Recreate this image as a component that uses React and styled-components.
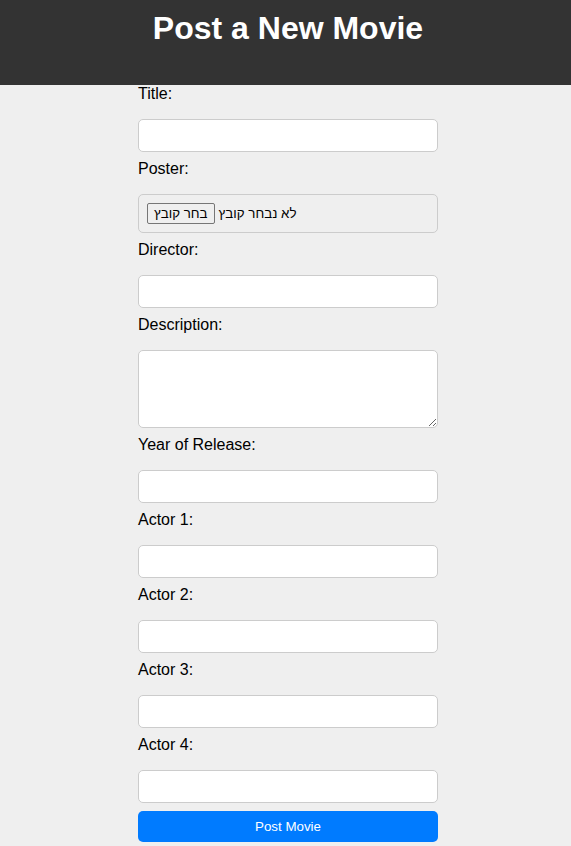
import React from "react";
import styled, { createGlobalStyle } from "styled-components";

const GlobalStyle = createGlobalStyle`
  html, body {
    margin: 0;
    padding: 0;
    background: #efefef;
    overflow: hidden;
  }
  body {
    font-family: "Liberation Sans", Arial, sans-serif;
  }
  #root {
    width: 576px;
  }
`;

const Header = styled.header`
  background: #333333;
  color: #fff;
  text-align: center;
  padding: 10px 0 38px;
`;

const Title = styled.h1`
  margin: 0;
  font-size: 32px;
  font-weight: 700;
  line-height: 37px;
`;

const Form = styled.form`
  width: 300px;
  margin: 0 auto;
  display: flex;
  flex-direction: column;
`;

const Label = styled.label`
  display: block;
  font-size: 16px;
  line-height: 18px;
  color: #000;
  margin-bottom: 16px;
`;

const Input = styled.input`
  box-sizing: border-box;
  width: 100%;
  height: 33px;
  padding: 8px;
  margin: 0 0 8px;
  border: 1px solid #ccc;
  border-radius: 5px;
  background: #fff;
  font-family: "Liberation Sans", Arial, sans-serif;
  font-size: 13.33px;
`;

const TextArea = styled.textarea`
  box-sizing: border-box;
  width: 100%;
  height: 78px;
  padding: 8px;
  margin: 0 0 8px;
  border: 1px solid #ccc;
  border-radius: 5px;
  background: #fff;
  font-family: "Liberation Sans", Arial, sans-serif;
  font-size: 13.33px;
  display: block;
`;

const FileBox = styled.div`
  box-sizing: border-box;
  width: 100%;
  height: 39px;
  padding: 8px;
  margin: 0 0 8px;
  border: 1px solid #ccc;
  border-radius: 5px;
  display: flex;
  align-items: center;
  gap: 4px;
  font-family: "Liberation Sans", "DejaVu Sans", Arial, sans-serif;
  font-size: 13.33px;
  color: #000;
`;

const FileButton = styled.span`
  box-sizing: border-box;
  height: 21px;
  padding: 0 6px;
  display: inline-flex;
  align-items: center;
  border: 1px solid #767676;
  border-radius: 2px;
  background: #efefef;
  direction: rtl;
`;

const FileText = styled.span`
  direction: rtl;
`;

const Submit = styled.button`
  box-sizing: border-box;
  width: 100%;
  height: 31px;
  padding: 8px;
  border: none;
  border-radius: 5px;
  background: #007bff;
  color: #fff;
  font-family: "Liberation Sans", Arial, sans-serif;
  font-size: 13.33px;
  cursor: pointer;
`;

const fields = ["Year of Release", "Actor 1", "Actor 2", "Actor 3", "Actor 4"];

export default function App() {
  return (
    <>
      <GlobalStyle />
      <Header>
        <Title>Post a New Movie</Title>
      </Header>
      <Form onSubmit={(e) => e.preventDefault()}>
        <Label>Title:</Label>
        <Input type="text" />
        <Label>Poster:</Label>
        <FileBox>
          <FileButton>בחר קובץ</FileButton>
          <FileText>לא נבחר קובץ</FileText>
        </FileBox>
        <Label>Director:</Label>
        <Input type="text" />
        <Label>Description:</Label>
        <TextArea />
        {fields.map((f) => (
          <React.Fragment key={f}>
            <Label>{f}:</Label>
            <Input type="text" />
          </React.Fragment>
        ))}
        <Submit type="submit">Post Movie</Submit>
      </Form>
    </>
  );
}
